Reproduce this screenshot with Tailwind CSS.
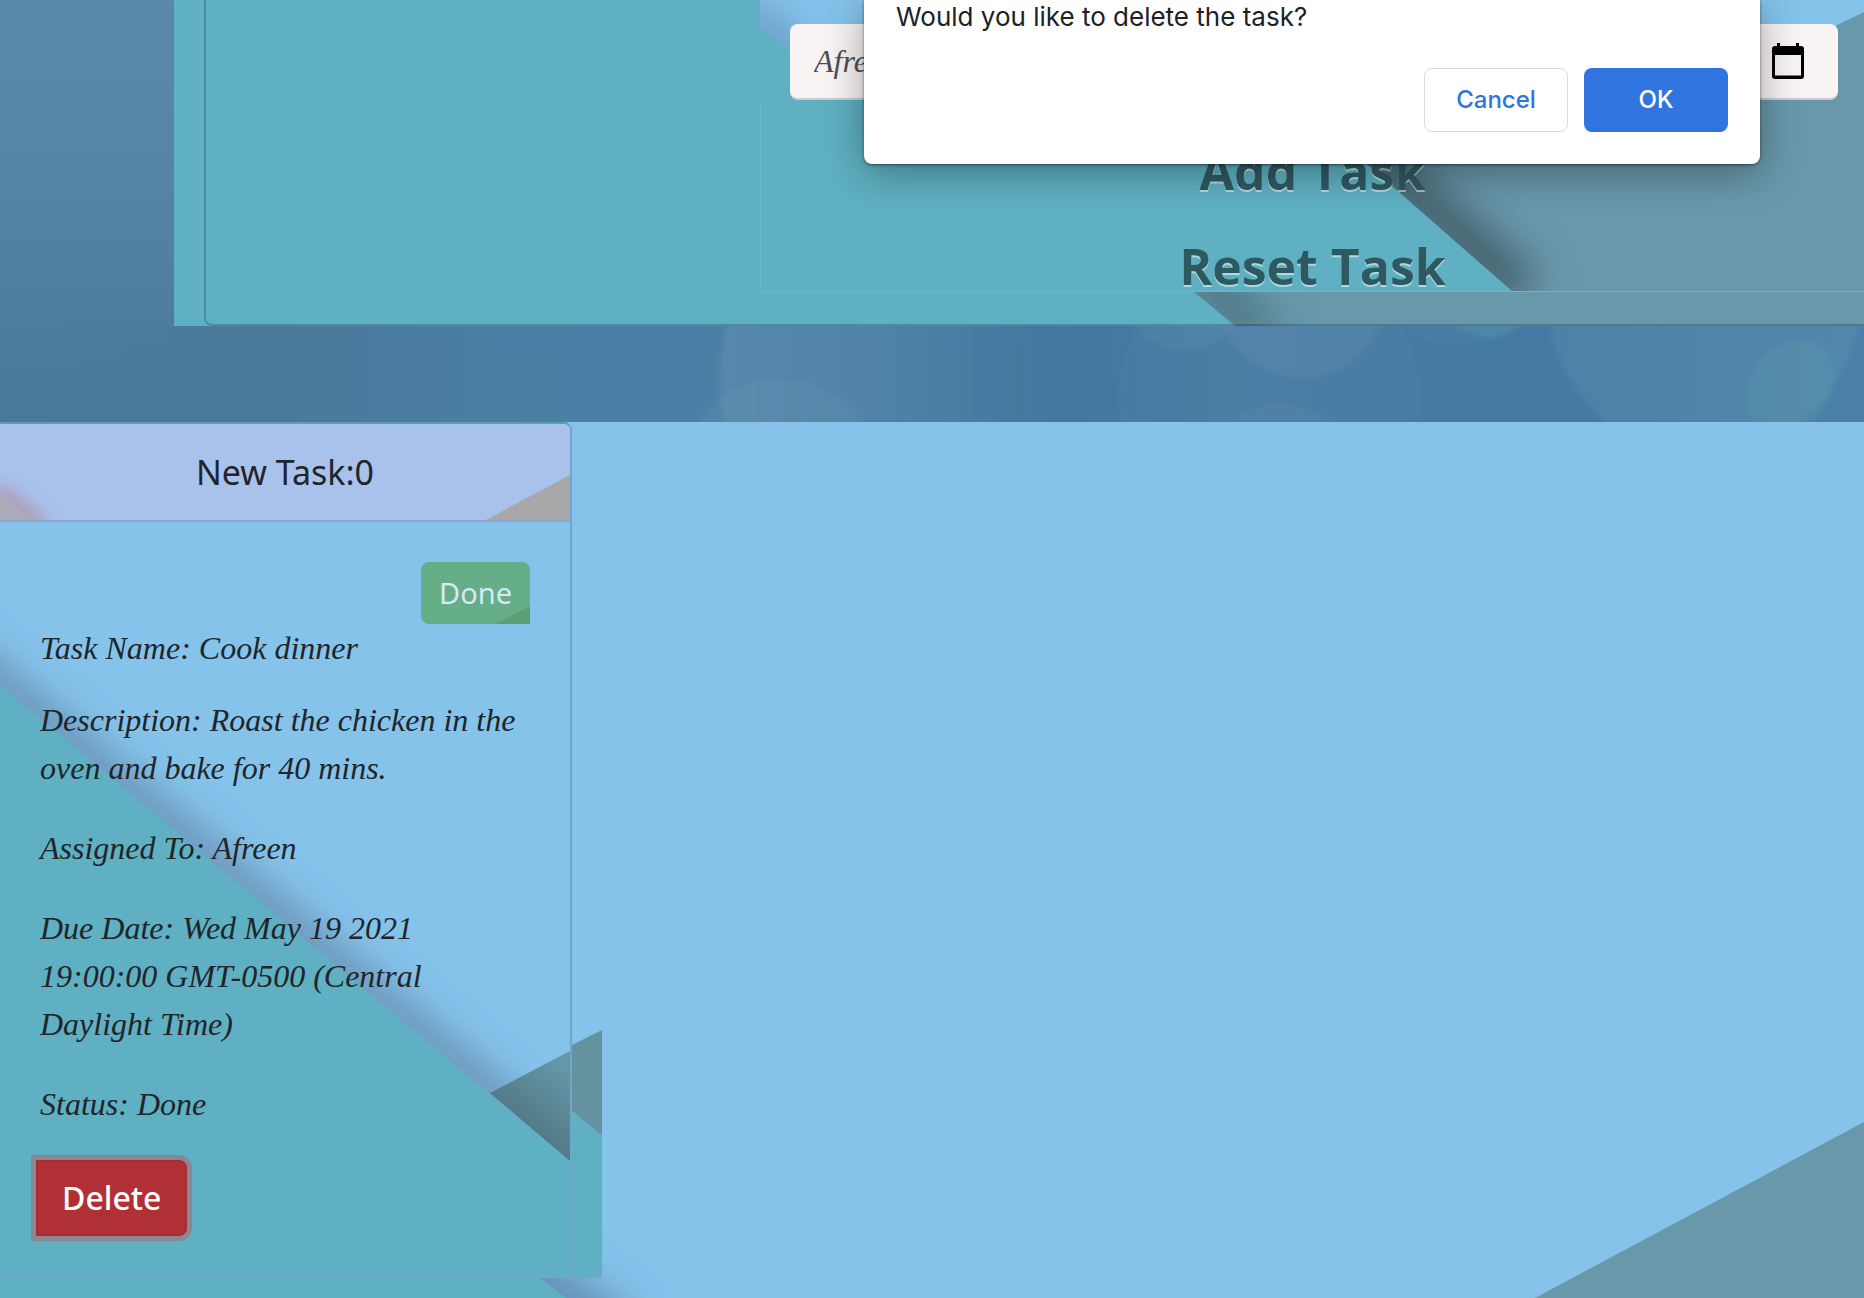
<!DOCTYPE html>
<html lang="en">
<head>
<meta charset="utf-8">
<title>Task Planner</title>
<script src="https://cdn.jsdelivr.net/npm/@tailwindcss/browser@4"></script>
</head>
<body class="relative flex min-h-screen flex-col overflow-x-hidden bg-[#4a7ca2] font-['Noto_Sans',sans-serif] text-[#212529]">

<!-- Bokeh backdrop behind the form panel -->
<svg class="absolute inset-x-0 top-0 h-[422px] w-full" viewBox="0 0 1864 422" preserveAspectRatio="none" aria-hidden="true">
  <defs>
    <linearGradient id="sky" x1="0" y1="0" x2="0" y2="1">
      <stop offset="0" stop-color="#5988a8"/><stop offset=".4" stop-color="#5584a7"/><stop offset=".75" stop-color="#4d7d9f"/><stop offset="1" stop-color="#48799b"/>
    </linearGradient>
    <linearGradient id="band" x1="0" y1="0" x2="1" y2="0">
      <stop offset="0" stop-color="#4a7c9d" stop-opacity="0"/><stop offset=".15" stop-color="#4a7a9b"/><stop offset=".32" stop-color="#4a80a8"/><stop offset=".48" stop-color="#4a7ea5"/><stop offset=".57" stop-color="#43779f"/><stop offset=".66" stop-color="#477ba3"/><stop offset=".82" stop-color="#4379a3"/><stop offset="1" stop-color="#4a80aa"/>
    </linearGradient>
    <linearGradient id="fade" x1="0" y1="0" x2="1" y2="0">
      <stop offset="0" stop-color="#86a8be" stop-opacity=".2"/><stop offset="1" stop-color="#86a8be" stop-opacity="0"/>
    </linearGradient>
    <filter id="haze" x="-10%" y="-10%" width="120%" height="120%"><feGaussianBlur stdDeviation="2"/></filter>
  </defs>
  <rect width="1864" height="422" fill="url(#sky)"/>
  <rect y="326" width="1864" height="96" fill="url(#band)"/>
  <g filter="url(#haze)">
    <ellipse cx="872" cy="380" rx="152" ry="190" fill="url(#fade)"/>
    <circle cx="780" cy="478" r="100" fill="#86a8be" fill-opacity=".12"/>
    <circle cx="1270" cy="400" r="151" fill="#7fa5c2" fill-opacity=".07"/>
    <circle cx="1302" cy="292" r="86" fill="#86a0bc" fill-opacity=".14"/>
    <circle cx="1185" cy="290" r="60" fill="#67a0b4" fill-opacity=".14"/>
    <circle cx="1460" cy="250" r="96" fill="#6ba0bb" fill-opacity=".1"/>
    <circle cx="1488" cy="285" r="52" fill="#62a6ae" fill-opacity=".24"/>
    <circle cx="1280" cy="480" r="76" fill="#7f9db4" fill-opacity=".12"/>
    <circle cx="1704" cy="300" r="156" fill="#6c9cb8" fill-opacity=".24"/>
    <ellipse cx="1790" cy="388" rx="40" ry="52" fill="#5e9fa9" fill-opacity=".28" transform="rotate(35 1790 388)"/>
  </g>
</svg>

<!-- Form panel -->
<section class="relative mb-24 ml-[174px] bg-[#5eb0c2] pl-[30px]">
  <svg class="absolute inset-0 h-full w-full" aria-hidden="true">
    <defs>
      <filter id="soft" x="-30%" y="-30%" width="160%" height="160%"><feGaussianBlur stdDeviation="20"/></filter>
    </defs>
    <path d="M1020 292H1690V326H1061Z" fill="#6898aa"/>
    <path d="M1000 272L1071 336H1110L1040 270Z" fill="#3f626c" fill-opacity=".9" filter="url(#soft)"/>
    <path d="M900 292H1020L1061 326H900Z" fill="#5eb0c2"/>
  </svg>
  <div class="relative rounded-bl-lg border-b-2 border-l-2 border-black/20 pb-8 pl-[554px]">
    <form>
      <div class="relative bg-[#85c3eb] pt-6 pr-[26px] pl-[30px]">
        <svg class="absolute inset-0 h-full w-full" aria-hidden="true">
          <path d="M-20 10L90 102" stroke="#4a6f98" stroke-width="24" stroke-opacity=".7" filter="url(#soft)"/>
          <path d="M0 27L88 100H0Z" fill="#5eb0c2"/>
          <path d="M1104 12V100H924Z" fill="#6898aa"/>
        </svg>
        <div class="relative flex gap-8">
          <input type="text" aria-label="Assigned to" value="Afreen" class="h-[76px] min-w-0 flex-1 rounded-lg border-b-2 border-[#c8ccd4] bg-[#f8f4f3] px-6 font-['Liberation_Serif',serif] text-[32px] text-[#495057] italic">
          <div class="relative min-w-0 flex-1">
            <input type="date" aria-label="Due date" value="2021-05-20" class="h-[76px] w-full rounded-lg border-b-2 border-[#c8ccd4] bg-[#f8f4f3] px-6 font-['Liberation_Serif',serif] text-[32px] text-[#495057] italic [&::-webkit-calendar-picker-indicator]:opacity-0">
            <svg class="pointer-events-none absolute top-[19px] right-[34px] h-9 w-8" viewBox="0 0 32 36" aria-hidden="true">
              <path fill-rule="evenodd" d="M5 0h3v3h16V0h3v3h2a3 3 0 0 1 3 3v27a3 3 0 0 1-3 3H3a3 3 0 0 1-3-3V6a3 3 0 0 1 3-3h2ZM3 12v20.500h26V12Z"/>
            </svg>
          </div>
        </div>
      </div>
      <div class="relative flex flex-col items-center gap-[45px] border-b border-l border-[#6cb8ca] bg-[#5eb0c2] pt-[46px] font-['Open_Sans',sans-serif] text-[50px] leading-[50px] font-bold text-[#2f5961]">
        <svg class="absolute inset-0 h-full w-full" aria-hidden="true">
          <path d="M533 0H1110V192H752Z" fill="#6898aa"/>
          <path d="M523 -18L762 192" stroke="#3f5a64" stroke-width="44" stroke-opacity=".95" filter="url(#soft)"/>
          <path d="M300 0H533L752 192H300Z" fill="#5eb0c2"/>
        </svg>
        <button type="submit" class="relative [text-shadow:0_2px_0_rgb(255_255_255/0.5)]">Add Task</button>
        <button type="reset" class="relative [text-shadow:0_2px_0_rgb(255_255_255/0.5)]">Reset Task</button>
      </div>
    </form>
  </div>
</section>

<!-- Task list -->
<main class="relative flex-1 overflow-hidden bg-[#85c3eb]">
  <svg class="absolute inset-0 h-full w-full" viewBox="0 0 1864 876" preserveAspectRatio="none" aria-hidden="true">
    <path d="M460 800L620 930" stroke="#4f7096" stroke-width="70" stroke-opacity=".6" filter="url(#soft)"/>
    <path d="M0 850H532L566 876H0Z" fill="#5eb0c2"/>
    <path d="M1864 700V876H1535Z" fill="#6898aa"/>
  </svg>
  <div class="relative w-[602px] overflow-hidden border-b-2 border-[#6fa9c8] bg-[#85c3eb] pr-[30px]">
    <svg class="absolute inset-0 h-full w-full" aria-hidden="true">
      <path d="M572 623L602 608V714L572 689Z" fill="#64939f"/>
      <path d="M572 689L602 714V856H572Z" fill="#5eb0c2"/>
    </svg>
    <article class="relative overflow-hidden rounded-tr-lg border-t-2 border-r-2 border-t-[#56a0b0] border-r-black/15">
      <header class="relative overflow-hidden border-b-2 border-black/15 bg-[#a8c2ec] py-6">
        <svg class="absolute inset-0 h-[98px] w-full" aria-hidden="true">
          <defs><filter id="glow" x="-50%" y="-50%" width="200%" height="200%"><feGaussianBlur stdDeviation="9"/></filter></defs>
          <path d="M-6 66L42 104" stroke="#b38a9e" stroke-width="18" stroke-opacity=".8" filter="url(#glow)"/>
          <path d="M0 71L32 98H0Z" fill="#a9adb9"/>
          <path d="M482 98L570 51V98Z" fill="#a8a8ab"/>
        </svg>
        <h2 class="relative text-center text-[34px] leading-[48px]">New Task:0</h2>
      </header>
      <div class="relative px-10 pt-10 pb-10">
        <svg class="absolute inset-0 h-full w-full" aria-hidden="true">
          <defs>
            <linearGradient id="wedge" gradientUnits="userSpaceOnUse" x1="530" y1="605" x2="574" y2="553">
              <stop offset="0" stop-color="#537a87"/><stop offset="1" stop-color="#6697a7"/>
            </linearGradient>
          </defs>
          <path d="M-40 130L600 664" stroke="#56708f" stroke-width="26" stroke-opacity=".85" filter="url(#soft)"/>
          <path d="M490 571L570 529V639Z" fill="url(#wedge)"/>
          <path d="M0 163L570 639V760H0Z" fill="#5eb0c2"/>
        </svg>
        <div class="relative flex justify-end">
          <button type="button" class="relative h-[62px] overflow-hidden rounded-lg rounded-br-none bg-[#65ae87] px-[18px] text-[29px] text-[#d5e9f6]">
            <svg class="absolute right-0 bottom-0 h-[18px] w-[34px]" viewBox="0 0 34 18" aria-hidden="true"><path d="M0 18L34 0V18Z" fill="#5ba074"/></svg>
            <span class="relative">Done</span>
          </button>
        </div>
        <div class="relative font-['Liberation_Serif',serif] text-[32px] leading-[48px] italic">
          <h3>Task Name: Cook dinner</h3>
          <p class="mt-6">Description: Roast the chicken in the<br>oven and bake for 40 mins.</p>
          <p class="mt-8">Assigned To: Afreen</p>
          <p class="mt-8">Due Date: Wed May 19 2021<br>19:00:00 GMT-0500 (Central<br>Daylight Time)</p>
          <p class="mt-8">Status: Done</p>
        </div>
        <button type="button" class="relative mt-8 -ml-1 block h-[76px] rounded-r-lg border-2 border-[#a82b32] bg-[#b03035] px-6 text-[32px] font-medium text-white ring-5 ring-[#8a8795]">Delete</button>
      </div>
    </article>
  </div>
</main>

<!-- Confirmation dialog -->
<div role="alertdialog" aria-labelledby="confirm-text" class="absolute top-0 right-[104px] w-[896px] rounded-b-lg bg-white px-8 pb-8 font-[Inter,sans-serif] shadow-[0_8px_40px_rgb(0_0_0/0.35),0_1px_3px_rgb(0_0_0/0.5)]">
  <p id="confirm-text" class="text-[26px] leading-[34px] text-[#202124]">Would you like to delete the task?</p>
  <div class="mt-[34px] flex justify-end gap-4 text-[24px] font-medium">
    <button type="button" class="h-16 w-36 rounded-lg border border-[#dadce0] text-[#3174e0]">Cancel</button>
    <button type="button" class="h-16 w-36 rounded-lg bg-[#3174e0] text-white">OK</button>
  </div>
</div>
</body>
</html>
